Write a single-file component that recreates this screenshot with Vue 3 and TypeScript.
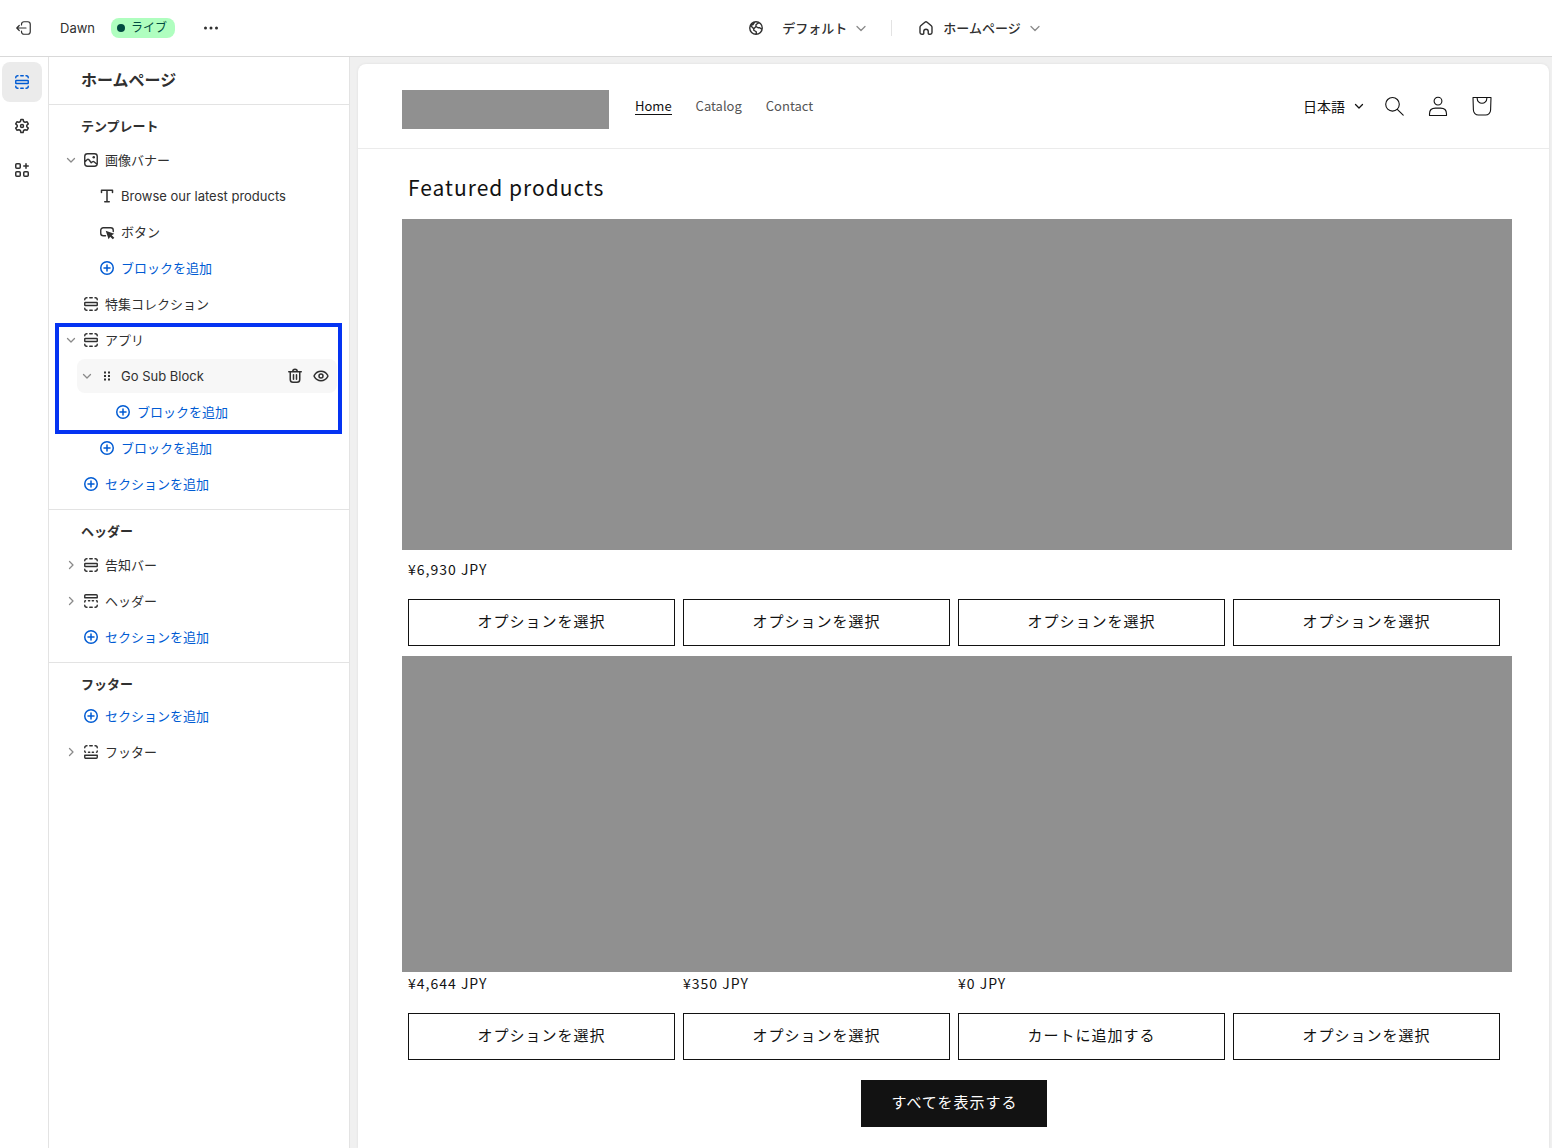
<script setup lang="ts">
import { h, type FunctionalComponent } from 'vue'

type Glyph = { line?: string; fill?: string; width?: number; box?: string }

const glyphs: Record<string, Glyph> = {
  exit: { line: 'M7.500 7V6.250a2.500 2.500 0 0 1 2.500-2.500h3.750a2.500 2.500 0 0 1 2.500 2.500v7.500a2.500 2.500 0 0 1-2.500 2.500H10a2.500 2.500 0 0 1-2.500-2.500V13M12 10H3M5.250 7.500 2.750 10l2.500 2.500', width: 1.2 },
  dots: { fill: 'M4.500 8.500a1.500 1.500 0 1 0 0 3 1.500 1.500 0 0 0 0-3ZM10 8.500a1.500 1.500 0 1 0 0 3 1.500 1.500 0 0 0 0-3ZM15.500 8.500a1.500 1.500 0 1 0 0 3 1.500 1.500 0 0 0 0-3Z' },
  globe: { line: 'M10 3.750a6.250 6.250 0 1 0 0 12.500 6.250 6.250 0 0 0 0-12.500ZM4.500 7.500l3.250 3.250v1.500l2.500 1.500v2.250M8.500 4.250 7 6.500 5 7.250M12.750 4.500 10 6.750v1.750l2 1.250h1.750l2 1.500M10 8.500 8 10.500' , width: 1.4 },
  home: { line: 'M4 9.300c0-.6.250-1.100.700-1.500l4.200-3.600a1.700 1.700 0 0 1 2.200 0l4.200 3.600c.450.400.700.900.700 1.500v5.200c0 1-.750 1.750-1.750 1.750H13a.75.75 0 0 1-.75-.75V13.500a2.250 2.250 0 0 0-4.500 0v2a.75.75 0 0 1-.75.75H5.750C4.750 16.250 4 15.500 4 14.500Z', width: 1.4 },
  down: { line: 'M6 8.500 10 12.500 14 8.500', width: 1.3 },
  downSmall: { line: 'M6.500 8.500 10 12l3.500-3.500', width: 1.3 },
  rightSmall: { line: 'M8.500 6.500 12 10l-3.500 3.500', width: 1.3 },
  section: { line: 'M4.250 8.500h11.500a.5.5 0 0 1 .5.5v2a.5.5 0 0 1-.5.5H4.250a.5.5 0 0 1-.5-.5V9a.5.5 0 0 1 .5-.5ZM3.750 5.750a2 2 0 0 1 2-2h.25M8.750 3.750h2.500M14 3.750h.250a2 2 0 0 1 2 2M3.750 14.250a2 2 0 0 0 2 2h.25M8.750 16.250h2.500M14 16.250h.250a2 2 0 0 0 2-2', width: 1.4 },
  header: { line: 'M4.750 3.750h10.500a1 1 0 0 1 1 1v2H3.750v-2a1 1 0 0 1 1-1ZM3.750 11v-.500a.75.75 0 0 1 .75-.75M7.500 9.750h1.250M11.250 9.750h1.250M15.500 9.750a.75.75 0 0 1 .75.75v.5M3.750 14.250a2 2 0 0 0 2 2h.25M8.750 16.250h2.500M14 16.250h.250a2 2 0 0 0 2-2', width: 1.4 },
  footer: { line: 'M3.750 13.250h12.500v2a1 1 0 0 1-1 1H4.750a1 1 0 0 1-1-1ZM3.750 9v.500a.75.75 0 0 0 .75.75M7.500 10.250h1.250M11.250 10.250h1.250M15.500 10.250a.75.75 0 0 0 .75-.75V9M3.750 5.750a2 2 0 0 1 2-2h.25M8.750 3.750h2.500M14 3.750h.250a2 2 0 0 1 2 2', width: 1.4 },
  image: { line: 'M6.500 3.750h7a2.750 2.750 0 0 1 2.750 2.750v7a2.750 2.750 0 0 1-2.750 2.750h-7a2.750 2.750 0 0 1-2.750-2.750v-7A2.750 2.750 0 0 1 6.500 3.750ZM4 11.750l2.250-2.250a1 1 0 0 1 1.500 0l2.500 3.250 1.250-1a1.200 1.200 0 0 1 1.500 0L16 14.250', fill: 'M12.750 6a1.250 1.250 0 1 0 0 2.500 1.250 1.250 0 0 0 0-2.500Z', width: 1.4 },
  text: { line: 'M4.500 6.500V4.250h11V6.500M10 4.250v11.500M7.750 15.750h4.500', width: 1.5 },
  button: { line: 'M8.500 13.750H6.250a2.500 2.500 0 0 1-2.500-2.500v-3a2.500 2.500 0 0 1 2.500-2.500h7.500a2.500 2.500 0 0 1 2.500 2.500v1.250', fill: 'M8.700 8.800 17.300 11.700 14.700 13.200 17.300 15.800 15.800 17.300 13.200 14.800 11.600 17.300Z', width: 1.4 },
  plus: { line: 'M10 3.750a6.250 6.250 0 1 0 0 12.500 6.250 6.250 0 0 0 0-12.500ZM10 7v6M7 10h6' },
  drag: { fill: 'M7 5.500h2v2H7zM11 5.500h2v2h-2zM7 9h2v2H7zM11 9h2v2h-2zM7 12.500h2v2H7zM11 12.500h2v2h-2z' },
  trash: { line: 'M3.750 5.750h12.500M7.750 5.500a2.250 2.250 0 0 1 4.500 0M5.250 6v7.500a2.750 2.750 0 0 0 2.750 2.750h4a2.750 2.750 0 0 0 2.750-2.750V6M8.500 8.750v4.500M11.500 8.750v4.500' },
  eye: { line: 'M10 5.250c3.300 0 5.600 2.200 6.700 4.100.250.400.250.900 0 1.300-1.100 1.900-3.400 4.100-6.700 4.100s-5.600-2.200-6.700-4.100a1.250 1.250 0 0 1 0-1.300c1.100-1.900 3.400-4.100 6.700-4.100ZM10 8a2 2 0 1 0 0 4 2 2 0 0 0 0-4Z' },
  gear: { line: 'M8.900 3.500h2.200l.5 2 1.500.85 2-.5 1.200 2-1.500 1.400v1.500l1.500 1.400-1.200 2-2-.5-1.500.85-.5 2H8.900l-.5-2-1.500-.85-2 .5-1.200-2 1.500-1.400V9.250L3.700 7.850l1.200-2 2 .5L8.400 5.500ZM10 8.500a1.500 1.500 0 1 0 0 3 1.500 1.500 0 0 0 0-3Z' },
  apps: { line: 'M4.750 3.750h2.500a1 1 0 0 1 1 1v2.500a1 1 0 0 1-1 1h-2.500a1 1 0 0 1-1-1v-2.500a1 1 0 0 1 1-1ZM4.750 11.750h2.500a1 1 0 0 1 1 1v2.500a1 1 0 0 1-1 1h-2.500a1 1 0 0 1-1-1v-2.500a1 1 0 0 1 1-1ZM12.750 11.750h2.500a1 1 0 0 1 1 1v2.500a1 1 0 0 1-1 1h-2.500a1 1 0 0 1-1-1v-2.500a1 1 0 0 1 1-1ZM14 3.750v4.500M11.750 6h4.500' },
  search: { line: 'M8.500 1.500a6.800 6.800 0 1 0 0 13.600A6.800 6.800 0 0 0 8.500 1.500ZM13.300 13.300 19.200 19.200', width: 1.1, box: '0 0 20 20' },
  person: { line: 'M10 1.200a3.900 3.900 0 1 0 0 7.800 3.900 3.900 0 0 0 0-7.800ZM1.500 19.500v-1.600c0-3.600 2.400-5.800 6-5.800h5c3.600 0 6 2.200 6 5.800v1.600Z', width: 1.1, box: '0 0 20 20' },
  bag: { line: 'M1 1.500h18l-.4 12.600a5 5 0 0 1-5 4.900H6.400a5 5 0 0 1-5-4.900ZM5.200 1.500v1a4.800 4.800 0 0 0 9.600 0v-1', width: 1.1, box: '0 0 20 20' },
}

const Icon: FunctionalComponent<{ name: string }> = ({ name }) => {
  const glyph = glyphs[name]
  return h('svg', { viewBox: glyph.box ?? '2 2 16 16', 'aria-hidden': 'true' }, [
    glyph.line && h('path', { d: glyph.line, fill: 'none', stroke: 'currentColor', 'stroke-width': glyph.width ?? 1.5, 'stroke-linecap': 'round', 'stroke-linejoin': 'round' }),
    glyph.fill && h('path', { d: glyph.fill, fill: 'currentColor' }),
  ])
}
Icon.props = ['name']

interface Row {
  label: string
  icon: string
  level: number
  toggle?: 'downSmall' | 'rightSmall'
  add?: boolean
  selected?: boolean
}

interface Group {
  title: string
  compact?: boolean
  chunks: { highlighted?: boolean; rows: Row[] }[]
}

const addBlock = (level: number): Row => ({ label: 'ブロックを追加', icon: 'plus', level, add: true })
const addSection: Row = { label: 'セクションを追加', icon: 'plus', level: 1, add: true }

const groups: Group[] = [
  {
    title: 'テンプレート',
    chunks: [
      {
        rows: [
          { label: '画像バナー', icon: 'image', level: 1, toggle: 'downSmall' },
          { label: 'Browse our latest products', icon: 'text', level: 2 },
          { label: 'ボタン', icon: 'button', level: 2 },
          addBlock(2),
          { label: '特集コレクション', icon: 'section', level: 1 },
        ],
      },
      {
        highlighted: true,
        rows: [
          { label: 'アプリ', icon: 'section', level: 1, toggle: 'downSmall' },
          { label: 'Go Sub Block', icon: 'drag', level: 2, toggle: 'downSmall', selected: true },
          addBlock(3),
        ],
      },
      { rows: [addBlock(2), addSection] },
    ],
  },
  {
    title: 'ヘッダー',
    chunks: [
      {
        rows: [
          { label: '告知バー', icon: 'section', level: 1, toggle: 'rightSmall' },
          { label: 'ヘッダー', icon: 'header', level: 1, toggle: 'rightSmall' },
          addSection,
        ],
      },
    ],
  },
  {
    title: 'フッター',
    compact: true,
    chunks: [{ rows: [addSection, { label: 'フッター', icon: 'footer', level: 1, toggle: 'rightSmall' }] }],
  },
]

const shelves = [
  {
    prices: ['¥6,930 JPY', '', '', ''],
    actions: ['オプションを選択', 'オプションを選択', 'オプションを選択', 'オプションを選択'],
  },
  {
    prices: ['¥4,644 JPY', '¥350 JPY', '¥0 JPY', ''],
    actions: ['オプションを選択', 'オプションを選択', 'カートに追加する', 'オプションを選択'],
  },
]
</script>

<template>
  <div class="editor">
    <header class="topbar">
      <div class="theme">
        <button class="plain exit" type="button" aria-label="Exit"><Icon class="icon" name="exit" /></button>
        <span class="theme-name">Dawn</span>
        <span class="badge"><i class="badge-dot"></i>ライブ</span>
        <button class="plain more" type="button" aria-label="More"><Icon class="icon" name="dots" /></button>
      </div>
      <div class="context">
        <button class="plain picker market" type="button">
          <Icon class="icon" name="globe" /><span>デフォルト</span><Icon class="icon faint" name="down" />
        </button>
        <span class="divider"></span>
        <button class="plain picker" type="button">
          <Icon class="icon" name="home" /><span>ホームページ</span><Icon class="icon faint" name="down" />
        </button>
      </div>
    </header>

    <div class="workspace">
      <nav class="rail">
        <button class="plain rail-button active" type="button" aria-label="Sections"><Icon class="icon" name="section" /></button>
        <button class="plain rail-button" type="button" aria-label="Settings"><Icon class="icon" name="gear" /></button>
        <button class="plain rail-button" type="button" aria-label="Apps"><Icon class="icon" name="apps" /></button>
      </nav>

      <aside class="sidebar">
        <h1 class="sidebar-title">ホームページ</h1>
        <section v-for="group in groups" :key="group.title" class="group" :class="{ compact: group.compact }">
          <h2 class="group-title">{{ group.title }}</h2>
          <ul v-for="(chunk, c) in group.chunks" :key="c" class="tree" :class="{ highlighted: chunk.highlighted }">
            <li
              v-for="(row, r) in chunk.rows"
              :key="r"
              class="row"
              :class="[`level-${row.level}`, { add: row.add, selected: row.selected }]"
            >
              <button v-if="row.toggle" class="plain toggle" type="button" :aria-label="`Toggle ${row.label}`">
                <Icon class="icon" :name="row.toggle" />
              </button>
              <span v-else class="toggle"></span>
              <button class="plain row-main" type="button">
                <Icon class="icon" :name="row.icon" /><span>{{ row.label }}</span>
              </button>
              <template v-if="row.selected">
                <button class="plain action" type="button" aria-label="Delete"><Icon class="icon" name="trash" /></button>
                <button class="plain action" type="button" aria-label="Hide"><Icon class="icon" name="eye" /></button>
              </template>
            </li>
          </ul>
        </section>
      </aside>

      <main class="canvas">
        <div class="store">
          <header class="store-header">
            <div class="logo"></div>
            <nav class="store-nav">
              <a class="current" href="#">Home</a>
              <a href="#">Catalog</a>
              <a href="#">Contact</a>
            </nav>
            <div class="store-tools">
              <button class="plain language" type="button"><span>日本語</span><Icon class="icon" name="downSmall" /></button>
              <button class="plain" type="button" aria-label="Search"><Icon class="store-icon" name="search" /></button>
              <button class="plain" type="button" aria-label="Account"><Icon class="store-icon" name="person" /></button>
              <button class="plain" type="button" aria-label="Cart"><Icon class="store-icon" name="bag" /></button>
            </div>
          </header>

          <section class="featured">
            <h2 class="featured-title">Featured products</h2>
            <div v-for="(shelf, s) in shelves" :key="s" class="shelf" :class="{ second: s === 1 }">
              <div class="media"></div>
              <div class="columns prices">
                <span v-for="(price, p) in shelf.prices" :key="p">{{ price }}</span>
              </div>
              <div class="columns">
                <button v-for="(action, a) in shelf.actions" :key="a" class="plain option" type="button">{{ action }}</button>
              </div>
            </div>
            <a class="show-all" href="#">すべてを表示する</a>
          </section>
        </div>
      </main>
    </div>
  </div>
</template>

<style>
body {
  margin: 0;
  background: #fff;
}
</style>

<style scoped>
.editor {
  display: flex;
  flex-direction: column;
  min-height: 100vh;
  color: #303030;
  font: 13px/20px Inter, 'Noto Sans CJK JP', sans-serif;
}

.plain {
  display: flex;
  align-items: center;
  margin: 0;
  padding: 0;
  border: 0;
  background: none;
  color: inherit;
  font: inherit;
  cursor: pointer;
}

.icon {
  flex: none;
  width: 16px;
  height: 16px;
}

.topbar {
  display: flex;
  align-items: center;
  height: 56px;
  border-bottom: 1px solid #d9d9d9;
}

.theme {
  display: flex;
  align-items: center;
  width: 223px;
  padding-left: 16px;
}

.theme-name {
  margin-left: 28px;
}

.badge {
  display: flex;
  align-items: center;
  gap: 6px;
  height: 20px;
  margin-left: 16px;
  padding: 0 8px 0 6px;
  border-radius: 8px;
  background: #affebf;
  color: #014b40;
  font-size: 12px;
}

.badge-dot {
  width: 8px;
  height: 8px;
  border-radius: 4px;
  background: #014b40;
}

.more {
  margin-left: 28px;
}

.context {
  display: flex;
  flex: 1;
  align-items: center;
  justify-content: center;
}

.picker {
  gap: 8px;
  font-weight: 500;
}

.picker span {
  margin: 0 -2px 0 1px;
}

.market span {
  margin-left: 10px;
}

.divider {
  width: 1px;
  height: 16px;
  margin: 0 26px 0 22px;
  background: #e3e3e3;
}

.faint {
  color: #8a8a8a;
}

.workspace {
  display: flex;
  flex: 1;
}

.rail {
  display: flex;
  flex: none;
  flex-direction: column;
  gap: 4px;
  width: 46px;
  padding: 5px 0 0 2px;
  border-right: 1px solid #e3e3e3;
}

.rail-button {
  justify-content: center;
  width: 40px;
  height: 40px;
  border-radius: 8px;
}

.rail-button.active {
  background: #ebebeb;
  color: #005bd3;
}

.sidebar {
  flex: none;
  width: 300px;
  border-right: 1px solid #e3e3e3;
}

.sidebar-title {
  margin: 0;
  padding: 11px 32px 12px;
  border-bottom: 1px solid #e3e3e3;
  font-size: 16px;
  font-weight: 600;
  line-height: 24px;
}

.group {
  padding-bottom: 7px;
  border-bottom: 1px solid #e3e3e3;
}

.group:last-child {
  border-bottom: 0;
}

.group-title {
  margin: 0;
  padding: 11px 32px 6px;
  font-size: 13px;
  font-weight: 600;
  line-height: 20px;
}

.group.compact .group-title {
  padding-bottom: 4px;
}

.tree {
  margin: 0;
  padding: 0;
  list-style: none;
}

.tree.highlighted {
  position: relative;
}

.tree.highlighted::after {
  position: absolute;
  inset: 1px 7px -4px 6px;
  border: 4px solid #0433f2;
  content: '';
  pointer-events: none;
}

.row {
  display: flex;
  align-items: center;
  height: 36px;
}

.level-1 {
  padding-left: 14px;
}

.level-2 {
  padding-left: 30px;
}

.level-3 {
  padding-left: 46px;
}

.row.selected {
  gap: 10px;
  height: 34px;
  margin: 1px 12px 1px 28px;
  padding: 0 8px 0 2px;
  border-radius: 8px;
  background: #f7f7f7;
}

.row.selected .row-main {
  margin-left: -6px;
}

.toggle {
  flex: none;
  width: 16px;
  margin-right: 4px;
  color: #8a8a8a;
}

.row.selected .toggle {
  margin-right: 0;
}

.row-main {
  flex: 1;
  gap: 6px;
  text-align: left;
}

.add {
  color: #005bd3;
}

.canvas {
  display: flex;
  flex: 1;
  min-width: 0;
  padding: 7px 3px 0 8px;
  background: #f0f0f0;
}

.store {
  flex: 1;
  min-width: 0;
  border-radius: 8px 8px 0 0;
  background: #fff;
  box-shadow: 0 0 3px #00000014;
  color: #121212;
  font-family: 'Noto Sans CJK JP', sans-serif;
}

.store-header {
  display: flex;
  align-items: center;
  height: 84px;
  padding: 0 57px 0 44px;
  border-bottom: 1px solid #ebebeb;
}

.logo {
  width: 207px;
  height: 39px;
  margin-top: 6px;
  background: #909090;
}

.store-nav {
  display: flex;
  gap: 24px;
  margin-left: 26px;
  font-size: 13px;
  line-height: 16px;
}

.store-nav a {
  border-bottom: 1px solid transparent;
  color: #555;
  text-decoration: none;
}

.store-nav a.current {
  border-bottom-color: #121212;
  color: #121212;
}

.store-tools {
  display: flex;
  gap: 24px;
  align-items: center;
  margin-left: auto;
}

.language {
  gap: 6px;
  margin-right: -7px;
  font-size: 14px;
}

.store-icon {
  width: 20px;
  height: 20px;
}

.featured {
  display: flex;
  flex-direction: column;
  padding: 22px 49px 21px 50px;
}

.featured-title {
  margin: 0 0 16px;
  font-size: 21px;
  font-weight: 400;
  line-height: 32px;
  letter-spacing: 1px;
}

.media {
  height: 331px;
  margin: 0 -12px 0 -6px;
  background: #909090;
}

.columns {
  display: grid;
  grid-template-columns: repeat(4, 1fr);
  gap: 8px;
}

.prices {
  padding: 9px 0 20px;
  font-size: 14px;
  line-height: 20px;
  letter-spacing: 1px;
}

.second {
  margin-top: 10px;
}

.second .media {
  height: 316px;
}

.second .prices {
  padding: 1px 0 20px;
}

.option {
  justify-content: center;
  height: 47px;
  padding-bottom: 4px;
  border: 1px solid #121212;
  font-size: 15px;
  letter-spacing: 1px;
}

.show-all {
  align-self: center;
  margin-top: 20px;
  padding: 0 29px 4px 30px;
  background: #121212;
  color: #fff;
  font-size: 15px;
  line-height: 43px;
  letter-spacing: 1px;
  text-decoration: none;
}
</style>
